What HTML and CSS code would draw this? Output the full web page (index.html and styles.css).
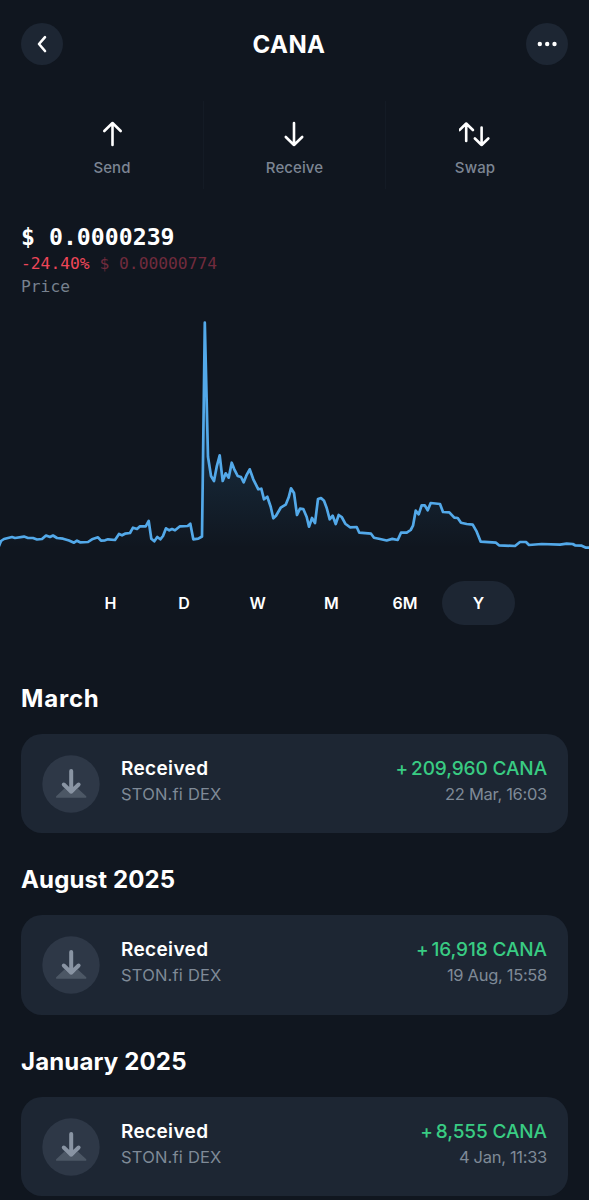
FILE: index.html
```html
<!DOCTYPE html>
<html lang="en">
<head>
  <meta charset="UTF-8">
  <meta name="viewport" content="width=device-width, initial-scale=1">
  <title>CANA</title>
  <link rel="stylesheet" href="styles.css">
</head>
<body>

  <header class="header">
    <button class="round-button" aria-label="Back">
      <svg width="42" height="42" viewBox="0 0 42 42"><path d="M24 14.2l-6 6.8 6 7"/></svg>
    </button>
    <h1>CANA</h1>
    <button class="round-button" aria-label="More">
      <svg class="dots" width="42" height="42" viewBox="0 0 42 42"><circle cx="13.8" cy="21" r="2.2"/><circle cx="21.2" cy="21" r="2.2"/><circle cx="28.5" cy="21" r="2.2"/></svg>
    </button>
  </header>

  <nav class="actions">
    <button class="action">
      <svg width="32" height="28" viewBox="0 0 32 28"><path d="M16.5 25V3M8.3 11l8.2-8 8.2 8"/></svg>
      <span>Send</span>
    </button>
    <button class="action">
      <svg width="32" height="28" viewBox="0 0 32 28"><path d="M15 3v22M6.8 17l8.2 8 8.2-8"/></svg>
      <span>Receive</span>
    </button>
    <button class="action">
      <svg width="32" height="28" viewBox="0 0 32 28"><path d="M7.2 21V3.5M.5 10l6.7-6.5 6.7 6.5M22.6 7.5V25M15.9 18.5l6.7 6.5 6.7-6.5"/></svg>
      <span>Swap</span>
    </button>
  </nav>

  <section class="price">
    <div class="price-value">$ 0.0000239</div>
    <div class="price-change">-24.40% <span>$ 0.00000774</span></div>
    <div class="price-label">Price</div>
  </section>

  <svg class="chart" width="589" height="250" viewBox="0 310 589 250">
    <defs>
      <linearGradient id="fill" gradientUnits="userSpaceOnUse" x1="0" y1="322" x2="0" y2="548">
        <stop offset="0" stop-color="#45aef5" stop-opacity="0.3"/>
        <stop offset="1" stop-color="#45aef5" stop-opacity="0"/>
      </linearGradient>
    </defs>
    <path id="chartArea" fill="url(#fill)"/>
    <polyline id="chartLine"/>
  </svg>

  <div class="periods">
    <button>H</button>
    <button>D</button>
    <button>W</button>
    <button>M</button>
    <button>6M</button>
    <button class="active">Y</button>
  </div>

  <main class="history">
    <h2 class="month-short">March</h2>
    <div class="card">
      <svg class="card-icon" width="58" height="58" viewBox="0 0 58 58">
        <circle cx="29" cy="29" r="28.7"/>
        <path class="tray" d="M22.5 33.5L14.4 41q-1.2 1.8.8 1.8h28q2 0 .8-1.8L35.8 33.5l-6.6 5.7z"/>
        <path class="arrow" d="M29.2 16v20.5M21.8 29.5l7.4 7.2 7.4-7.2"/>
      </svg>
      <div class="card-info">
        <div class="title">Received</div>
        <div class="sub source">STON.fi DEX</div>
      </div>
      <div class="card-amount">
        <div class="amount"><span class="plus">+</span>209,960 CANA</div>
        <div class="sub">22 Mar, 16:03</div>
      </div>
    </div>

    <h2>August 2025</h2>
    <div class="card">
      <svg class="card-icon" width="58" height="58" viewBox="0 0 58 58">
        <circle cx="29" cy="29" r="28.7"/>
        <path class="tray" d="M22.5 33.5L14.4 41q-1.2 1.8.8 1.8h28q2 0 .8-1.8L35.8 33.5l-6.6 5.7z"/>
        <path class="arrow" d="M29.2 16v20.5M21.8 29.5l7.4 7.2 7.4-7.2"/>
      </svg>
      <div class="card-info">
        <div class="title">Received</div>
        <div class="sub source">STON.fi DEX</div>
      </div>
      <div class="card-amount">
        <div class="amount"><span class="plus">+</span>16,918 CANA</div>
        <div class="sub">19 Aug, 15:58</div>
      </div>
    </div>

    <h2>January 2025</h2>
    <div class="card">
      <svg class="card-icon" width="58" height="58" viewBox="0 0 58 58">
        <circle cx="29" cy="29" r="28.7"/>
        <path class="tray" d="M22.5 33.5L14.4 41q-1.2 1.8.8 1.8h28q2 0 .8-1.8L35.8 33.5l-6.6 5.7z"/>
        <path class="arrow" d="M29.2 16v20.5M21.8 29.5l7.4 7.2 7.4-7.2"/>
      </svg>
      <div class="card-info">
        <div class="title">Received</div>
        <div class="sub source">STON.fi DEX</div>
      </div>
      <div class="card-amount">
        <div class="amount"><span class="plus">+</span>8,555 CANA</div>
        <div class="sub">4 Jan, 11:33</div>
      </div>
    </div>
  </main>

  <script src="chart.js"></script>
</body>
</html>
```
FILE: chart.js
```js
const points = [
  [-1, 546], [1, 541], [4, 539], [12, 537], [15, 538], [24, 536.6], [28, 538], [33, 538],
  [37, 539.5], [42, 539], [46, 535.5], [50, 537], [53, 535.5], [57, 538], [63, 538.7],
  [69, 540.5], [74, 542.7], [77, 540.7], [80, 542.3], [88, 542], [92, 539.3], [98, 537.3],
  [101, 540.7], [105, 540.3], [108, 539.3], [115, 540], [119, 534], [122, 535.3],
  [125, 533.7], [130, 533], [133, 527.7], [137, 529], [140, 526.3], [145.7, 526.3],
  [148.7, 521], [151.3, 538.7], [154.3, 541.3], [157.3, 537], [160.3, 539.3], [163, 536],
  [166, 528.3], [169.3, 530.3], [172, 529], [175, 530.3], [180, 526.3], [187.7, 526],
  [190.3, 523.7], [193.3, 539.3], [198.3, 538.7], [202, 536.5], [204.8, 322.7],
  [208, 456.7], [211, 476], [214, 481], [216.7, 466.7], [219.7, 455.3], [222.7, 481],
  [225.7, 473.3], [228.7, 477.7], [231.7, 462.7], [234.3, 469.3], [237.7, 476], [241, 477],
  [243.7, 482.3], [246.3, 475.7], [249.7, 469.3], [253.3, 479.3], [258.3, 489.3],
  [261.3, 488.7], [264, 499.3], [267.3, 496.7], [270.7, 506.7], [273.3, 518.3],
  [276, 515.7], [280.7, 507.7], [285.7, 504.7], [288.7, 497.3], [291, 488.3], [294, 493],
  [297, 515], [300, 508.7], [303.3, 509], [306.7, 517], [309, 526.7], [312, 518],
  [315, 523], [318, 499], [321, 498], [324, 500.7], [326.7, 508], [329.7, 519.3],
  [332.7, 515.7], [335.7, 524], [338.7, 515], [341.7, 517], [345.3, 523.7], [350, 527.3],
  [356.7, 527], [359.3, 532.7], [371, 533.7], [374, 537.7], [380, 539], [386.7, 540.5],
  [392.3, 538.9], [397.7, 540], [401, 532.7], [406.7, 532.7], [410.7, 530], [413, 525.7],
  [415.7, 510.7], [418.7, 514.3], [421.7, 505.3], [424.7, 505.3], [427.7, 510.3],
  [430.7, 503], [440, 504], [443, 512], [449.3, 512.3], [454.3, 517.7], [457.7, 518],
  [461, 522.7], [466.7, 524], [472.7, 524.7], [476.7, 531.7], [480.7, 541.7],
  [496, 542.7], [499, 545.3], [515, 546], [520, 542], [526, 542], [529, 545],
  [541.7, 544], [560, 544.7], [566.7, 543.7], [572.7, 544], [575, 545.3], [581.7, 545.7],
  [586, 547.7], [590, 547.7]
];

const line = points.map(p => p.join(",")).join(" ");
document.getElementById("chartLine").setAttribute("points", line);
document.getElementById("chartArea").setAttribute("d", `M${line} L590,548 L-1,548 Z`);
```
FILE: styles.css
```css
* {
  box-sizing: border-box;
}
body {
  font-family: Inter, "Open Sans", sans-serif;
  margin: 0;
  height: 1200px;
  overflow: hidden;
  background-color: #10161f;
  color: #fff;
}
button {
  font-family: inherit;
  color: inherit;
  border: none;
  background: none;
  padding: 0;
}
svg {
  display: block;
  fill: none;
  stroke: #fff;
  stroke-width: 2.6;
  stroke-linecap: round;
  stroke-linejoin: round;
}
.header {
  display: flex;
  justify-content: space-between;
  align-items: center;
  height: 87px;
  padding: 0 21px;
}
.header h1 {
  margin: 2px 11px 0 0;
  font-size: 24px;
  line-height: 30px;
  font-weight: 700;
  letter-spacing: 0.4px;
}
.round-button {
  width: 42px;
  height: 42px;
  border-radius: 50%;
  background-color: #1d2633;
}
.dots {
  fill: #fff;
  stroke: none;
}
.actions {
  display: grid;
  grid-template-columns: repeat(3, 182px);
  height: 88px;
  margin: 14px 20px 0 21px;
}
.action {
  display: flex;
  flex-direction: column;
  align-items: center;
  padding-top: 19px;
  font-size: 15px;
  font-weight: 500;
  line-height: 20px;
  letter-spacing: 0.1px;
  color: #7c8593;
}
.action + .action {
  border-left: 1px solid #141b25;
}
.action:last-child {
  padding-right: 3px;
}
.action span {
  margin-top: 10px;
}
.price {
  margin: 32px 21px 0;
  font-family: "DejaVu Sans Mono", "Liberation Mono", monospace;
  font-size: 16.3px;
  line-height: 23px;
}
.price-value {
  font-size: 23.2px;
  line-height: 32px;
  font-weight: 700;
  margin-bottom: -1px;
}
.price-change {
  color: #ee4659;
}
.price-change span {
  color: #702b3d;
}
.price-label {
  color: #77818e;
}
.chart {
  margin-top: 12px;
}
.chart polyline {
  stroke: #53a9e9;
  stroke-width: 2.7;
}
.chart path {
  stroke: none;
}
.periods {
  display: flex;
  justify-content: center;
  margin: 21px 0 0;
}
.periods button {
  width: 73.6px;
  height: 44px;
  border-radius: 22px;
  font-size: 16px;
  font-weight: 600;
}
.periods .active {
  background-color: #1d2633;
}
.history {
  padding: 56.5px 21px 0;
}
.history h2 {
  margin: 0;
  font-size: 24px;
  line-height: 34px;
  font-weight: 700;
  letter-spacing: 0.15px;
}
.history .month-short {
  letter-spacing: 0.8px;
}
.card {
  display: flex;
  height: 99.5px;
  margin: 18px 0 30px;
  padding: 21px 21px 0;
  border-radius: 21px;
  background-color: #1d2633;
}
.card-icon circle {
  fill: #2e3847;
  stroke: none;
}
.card-icon .tray {
  fill: #4c5765;
  stroke: none;
}
.card-icon .arrow {
  stroke: #8994a3;
  stroke-width: 4;
}
.card-info {
  flex: 1;
  padding: 1px 0 0 21px;
}
.card-amount {
  padding-top: 1px;
  text-align: right;
}
.title, .amount {
  font-size: 19px;
  font-weight: 600;
  line-height: 26px;
}
.title {
  letter-spacing: 0.35px;
}
.amount {
  color: #39cc83;
  font-weight: 500;
  letter-spacing: -0.1px;
}
.plus {
  margin-right: 3px;
}
.sub {
  font-size: 16.5px;
  line-height: 25px;
  letter-spacing: -0.3px;
  color: #7f8a97;
}
.source {
  letter-spacing: 0.2px;
}
```
